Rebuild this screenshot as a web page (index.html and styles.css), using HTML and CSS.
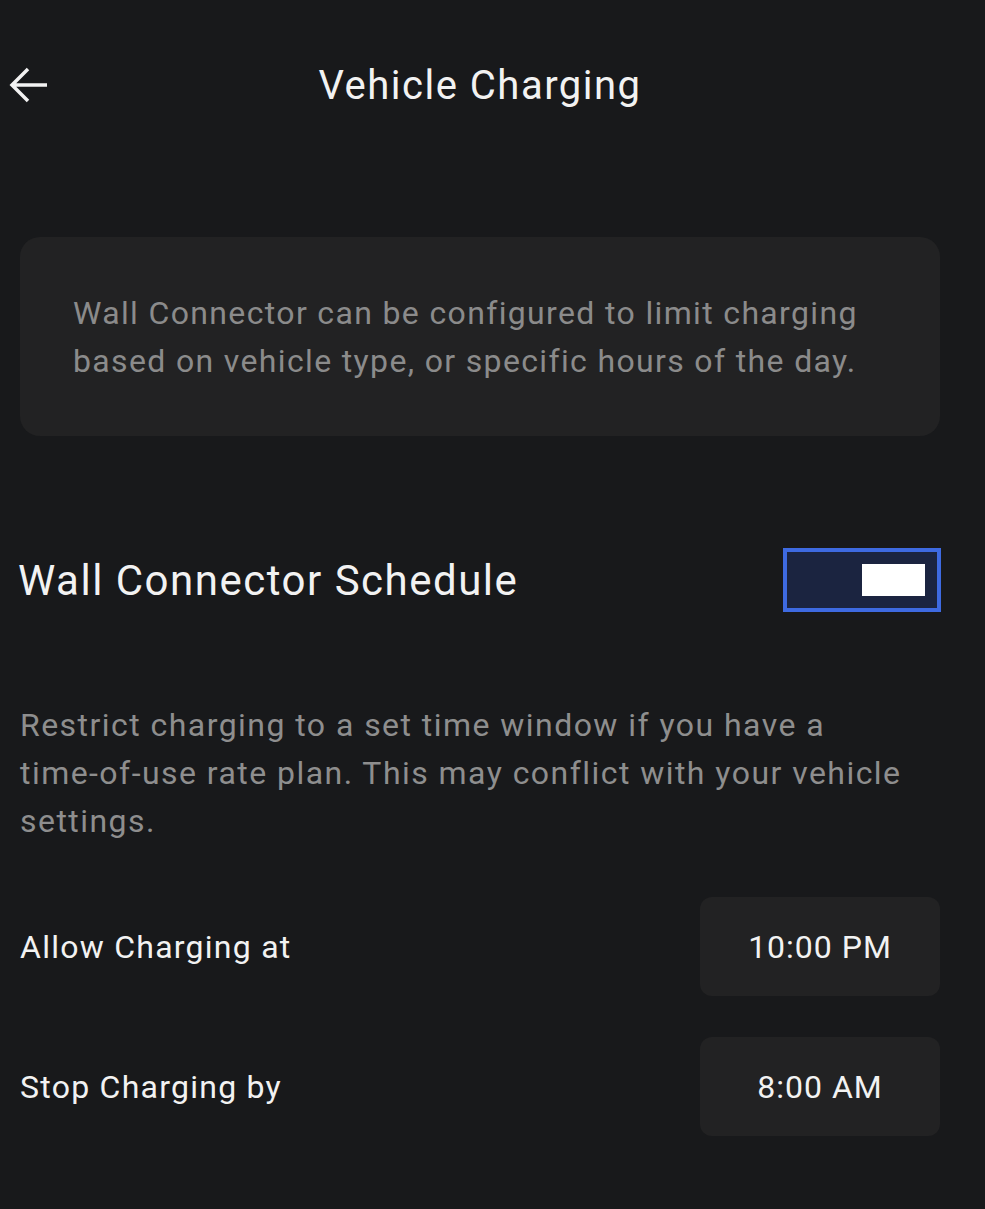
FILE: index.html
```html
<!DOCTYPE html>
<html>
<head>
    <meta charset="utf-8">
    <meta name="viewport" content="width=device-width, initial-scale=1.0">
    <title>Vehicle Charging</title>
    <link rel="stylesheet" href="styles.css">
</head>
<body>
    <div class="page">
        <div class="header">
            <svg class="back" width="40" height="40" viewBox="0 0 40 40">
                <path d="M38 20 H4 M19 4 L3 20 L19 36" fill="none" stroke="#f2f2f2" stroke-width="3.5"/>
            </svg>
            <h1>Vehicle Charging</h1>
        </div>

        <div class="info-card">
            Wall Connector can be configured to limit charging
            based on vehicle type, or specific hours of the day.
        </div>

        <div class="schedule-row">
            <h2>Wall Connector Schedule</h2>
            <div class="toggle on"><span class="knob"></span></div>
        </div>

        <p class="desc">Restrict charging to a set time window if you have a <span class="nowrap">time-of-use</span> rate plan. This may conflict with your vehicle settings.</p>

        <div class="time-row">
            <span class="time-label">Allow Charging at</span>
            <button class="time-btn">10:00 PM</button>
        </div>

        <div class="time-row">
            <span class="time-label">Stop Charging by</span>
            <button class="time-btn">8:00 AM</button>
        </div>
    </div>
</body>
</html>
```

FILE: styles.css
```css
body {
    margin: 0;
    background: #18191b;
    font-family: Roboto, "Liberation Sans", sans-serif;
    color: #f2f2f2;
}
.page {
    width: 920px;
    margin-left: 20px;
}
.header {
    position: relative;
    height: 54px;
    padding-top: 58px;
    display: flex;
    align-items: center;
    justify-content: center;
}
.back {
    position: absolute;
    left: -11px;
    top: 65px;
}
.header h1 {
    margin: 0;
    font-size: 40px;
    font-weight: 400;
    letter-spacing: 1.5px;
}
.info-card {
    margin-top: 125px;
    background: #222223;
    border-radius: 20px;
    padding: 52px 53px 51px;
    font-size: 32px;
    line-height: 48px;
    color: #8b8b8b;
    letter-spacing: 1.35px;
}
.schedule-row {
    margin-top: 112px;
    display: flex;
    align-items: center;
    justify-content: space-between;
}
.schedule-row h2 {
    margin: 0 0 0 -2px;
    font-size: 42px;
    font-weight: 400;
    letter-spacing: 1.5px;
}
.toggle {
    width: 150px;
    height: 56px;
    border: 4px solid #3e6ae1;
    background: #1b2440;
    box-sizing: content-box;
    display: flex;
    align-items: center;
    justify-content: flex-end;
    margin-right: -1px;
}
.toggle .knob {
    width: 63px;
    height: 32px;
    background: #ffffff;
    margin-right: 12px;
}
.desc {
    margin: 89px 0 0;
    font-size: 32px;
    line-height: 48px;
    color: #8e8e8e;
    letter-spacing: 1.45px;
}
.nowrap {
    white-space: nowrap;
}
.time-row {
    display: flex;
    align-items: center;
    justify-content: space-between;
    margin-top: 52px;
}
.time-row + .time-row {
    margin-top: 41px;
}
.time-label {
    font-size: 32px;
    letter-spacing: 1.25px;
}
.time-btn {
    width: 240px;
    height: 99px;
    background: #222223;
    border: none;
    border-radius: 12px;
    color: #f2f2f2;
    font-family: inherit;
    font-size: 32px;
    letter-spacing: 1px;
}
```
